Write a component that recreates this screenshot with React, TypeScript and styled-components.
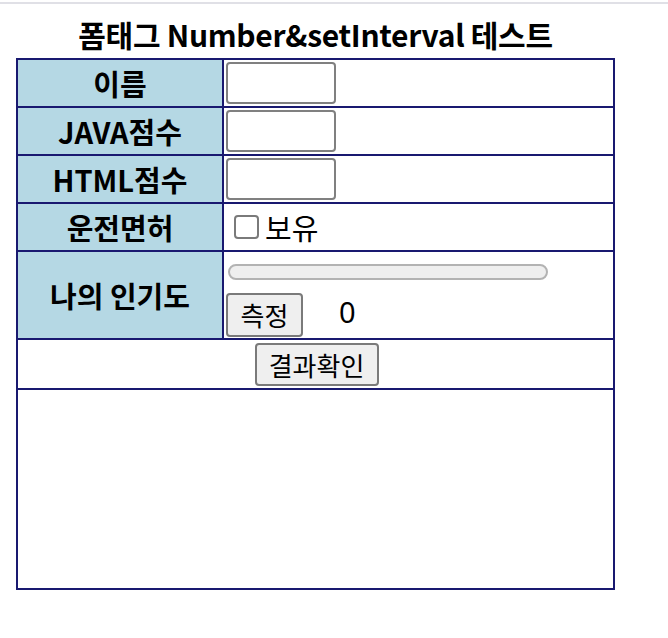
import React from "react";
import styled, { createGlobalStyle } from "styled-components";

const GlobalStyle = createGlobalStyle`
  html, body { margin: 0; padding: 0; background: #ffffff; }
  body { font-family: "Noto Sans CJK KR", "Noto Sans", sans-serif; color: #000; }
`;

const TopRule = styled.div`
  height: 2px;
  margin-top: 2px;
  background: #e0e0e6;
`;

const Page = styled.div`
  width: 599px;
  padding-left: 16px;
`;

const Title = styled.h1`
  margin: 0;
  height: 54px;
  line-height: 60px;
  text-align: center;
  font-size: 30px;
  font-weight: 700;
  letter-spacing: -0.3px;
`;

const Table = styled.table`
  width: 599px;
  border-collapse: collapse;
  table-layout: fixed;
`;

const Row = styled.tr<{ $h: number }>`
  height: ${(p) => p.$h}px;
`;

const Label = styled.th`
  width: 204px;
  padding: 0;
  border: 2px solid #191970;
  background: #b5d8e4;
  font-size: 29px;
  font-weight: 700;
  text-align: center;
  vertical-align: middle;
`;

const Cell = styled.td<{ $center?: boolean }>`
  padding: 0 0 0 2px;
  border: 2px solid #191970;
  text-align: ${(p) => (p.$center ? "center" : "left")};
  vertical-align: middle;
`;

const TextInput = styled.input`
  display: block;
  box-sizing: border-box;
  width: 110px;
  height: 42px;
  border: 2px solid #808080;
  border-radius: 4px;
  background: #fff;
  outline: none;
`;

const CheckLine = styled.label`
  display: flex;
  align-items: center;
  padding-left: 8px;
  font-size: 29px;
`;

const Box = styled.span`
  display: inline-block;
  box-sizing: border-box;
  width: 25px;
  height: 24px;
  border: 2px solid #7a7a7a;
  border-radius: 4px;
  background: #fff;
  margin-right: 6px;
`;

const Popularity = styled.div`
  display: flex;
  flex-direction: column;
  gap: 12px;
  padding-top: 11px;
`;

const Meter = styled.div`
  box-sizing: border-box;
  width: 320px;
  height: 16px;
  margin-left: 2px;
  border: 2px solid #b3b3b3;
  border-radius: 8px;
  background: #efefef;
`;

const MeasureLine = styled.div`
  display: flex;
  align-items: center;
`;

const Button = styled.button<{ $w: number }>`
  box-sizing: border-box;
  width: ${(p) => p.$w}px;
  height: 44px;
  padding: 0;
  border: 2px solid #7a7a7a;
  border-radius: 4px;
  background: #efefef;
  font-family: "Noto Sans CJK KR", "Noto Sans", sans-serif;
  font-size: 26px;
  color: #000;
`;

const Score = styled.span`
  margin-left: 36px;
  margin-bottom: 6px;
  font-size: 29px;
  font-family: "Noto Sans", "Noto Sans CJK KR", sans-serif;
`;

export default function App() {
  return (
    <>
      <GlobalStyle />
      <TopRule />
      <Page>
        <Title>폼태그 Number&amp;setInterval 테스트</Title>
        <Table>
          <tbody>
            <Row $h={48}>
              <Label>이름</Label>
              <Cell><TextInput type="text" /></Cell>
            </Row>
            <Row $h={48}>
              <Label>JAVA점수</Label>
              <Cell><TextInput type="text" /></Cell>
            </Row>
            <Row $h={48}>
              <Label>HTML점수</Label>
              <Cell><TextInput type="text" /></Cell>
            </Row>
            <Row $h={48}>
              <Label>운전면허</Label>
              <Cell>
                <CheckLine><Box />보유</CheckLine>
              </Cell>
            </Row>
            <Row $h={88}>
              <Label>나의 인기도</Label>
              <Cell>
                <Popularity>
                  <Meter />
                  <MeasureLine>
                    <Button $w={77}>측정</Button>
                    <Score>0</Score>
                  </MeasureLine>
                </Popularity>
              </Cell>
            </Row>
            <Row $h={50}>
              <Cell colSpan={2} $center>
                <Button $w={124} style={{ height: 43 }}>결과확인</Button>
              </Cell>
            </Row>
            <Row $h={200}>
              <Cell colSpan={2} />
            </Row>
          </tbody>
        </Table>
      </Page>
    </>
  );
}
